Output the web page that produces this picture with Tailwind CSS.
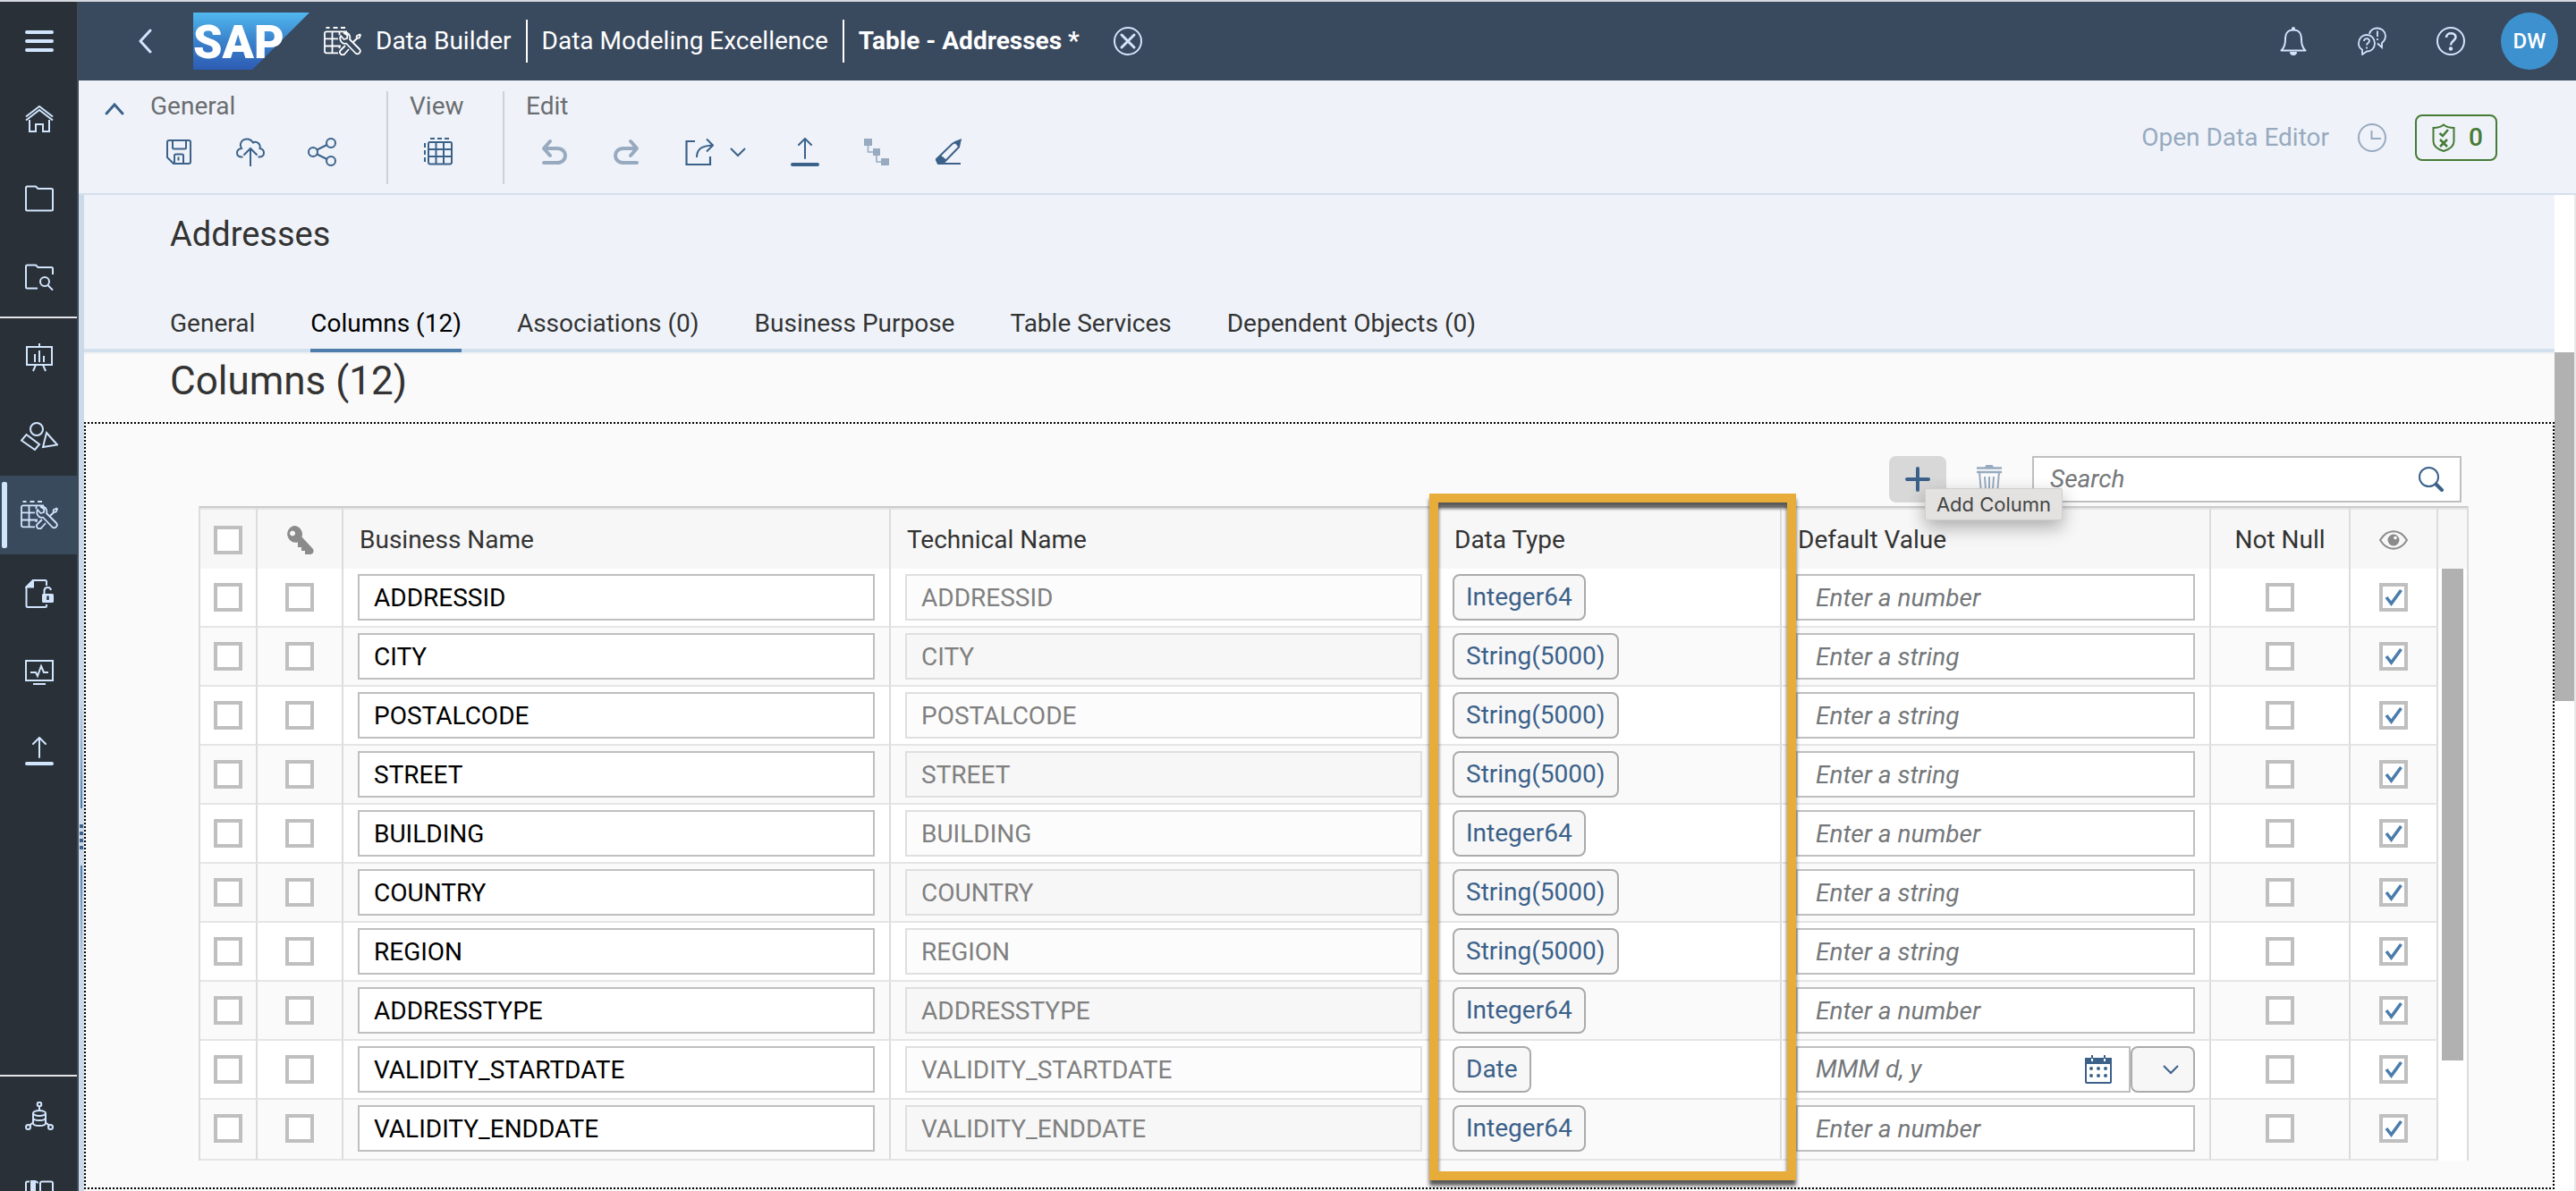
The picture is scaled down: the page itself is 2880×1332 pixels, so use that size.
<!DOCTYPE html>
<html lang="en">
<head>
<meta charset="utf-8">
<title>Data Builder - Table - Addresses</title>
<script src="https://cdn.jsdelivr.net/npm/@tailwindcss/browser@4"></script>
</head>
<body class="h-screen overflow-hidden bg-[#fafafa] font-['Roboto',sans-serif] text-[28px] leading-8 text-[#333]">
<svg class="hidden" aria-hidden="true">
  <symbol id="data-builder" viewBox="0 0 42 32">
    <g fill="none" stroke="currentColor" stroke-width="1.8" stroke-linejoin="round">
      <path d="M2.500 1h4M10.500 1h5M19 1h5"/>
      <path d="M26 5.300H3q-2 0-2 2v20q0 2 2 2h13M9.500 5.300v24M17.500 5.300v4M17.500 21v3M1 13.300h15M1 21.500h18"/>
      <path d="M19 10l3.500 4 3.500-1 .5-3.500-4-2.500c3.500-1.800 8 2 6.500 7l11 11a3.200 3.200 0 0 1-4.500 4.500L25 18.500c-4 1.500-8.500-3.500-6-8.500z"/>
      <path d="M33 17l4.500-4.500M37 10l3.300-1.500.7.8-1.500 3.200-1.700.5-1.300-1.300zM24 21l-5 5a3 3 0 0 0 4.200 4.500L28 25"/>
    </g>
  </symbol>
  <symbol id="check" viewBox="0 0 32 32"><path d="M8 16l5.500 7L24.500 8" fill="none" stroke="#4a7cac" stroke-width="3.600"/></symbol>
</svg>

<div class="flex h-full border-t-2 border-[#d5d9df]">
  <!-- Side navigation -->
  <aside class="flex w-[88px] shrink-0 flex-col border-r-2 border-[#404a57] bg-[#2a3037] text-[#d1e5fd]">
    <nav class="flex min-h-0 flex-1 flex-col" aria-label="Main">
      <button class="grid h-[88px] shrink-0 place-items-center pl-[2px]" aria-label="Menu"><svg class="size-8" viewBox="0 0 32 32" stroke="currentColor" stroke-width="4" stroke-linecap="round"><path d="M2 6h28M2 16h28M2 26h28"/></svg></button>
      <a href="#" class="grid h-[88px] shrink-0 place-items-center pl-[2px]" aria-label="Home"><svg class="size-8" viewBox="0 0 32 32" fill="none" stroke="currentColor" stroke-width="2"><path d="M1 16.500L16 5l15 11.500M1 12.500L16 1l15 11.500"/><path d="M5 16v13h7v-8h8v8h7V16"/></svg></a>
      <a href="#" class="grid h-[88px] shrink-0 place-items-center pl-[2px]" aria-label="Spaces"><svg class="size-8" viewBox="0 0 32 32" fill="none" stroke="currentColor" stroke-width="2"><path d="M1 4q0-1.500 1.500-1.500H12l2.500 2.500H29.500q1.500 0 1.500 1.500V28q0 1.500-1.500 1.500h-27Q1 29.500 1 28z"/></svg></a>
      <a href="#" class="grid h-[88px] shrink-0 place-items-center pl-[2px]" aria-label="Repository Explorer"><svg class="size-8" viewBox="0 0 32 32" fill="none" stroke="currentColor" stroke-width="2"><path d="M14 28.500H2.500Q1 28.500 1 27V4q0-1.500 1.500-1.500H12L14.500 5H29.500Q31 5 31 6.500V13"/><circle cx="22" cy="21" r="5"/><path d="M25.500 25l5.500 5.500"/></svg></a>
      <div class="h-[2px] shrink-0 bg-[#e3e5e8]"></div>
      <a href="#" class="grid h-[88px] shrink-0 place-items-center pl-[2px]" aria-label="Analytics"><svg class="size-8" viewBox="0 0 32 32" fill="none" stroke="currentColor" stroke-width="2"><path d="M2 4h28v20H2zM16 0v4M12 24l-3 7M20 24l3 7M11 12v9M16 8v13M21 14v7"/></svg></a>
      <a href="#" class="grid h-[88px] shrink-0 place-items-center pl-[2px]" aria-label="Business Builder"><svg class="h-8 w-[42px]" viewBox="0 0 42 32" fill="none" stroke="currentColor" stroke-width="2"><circle cx="18" cy="8" r="7"/><path d="M6.500 14l14.500 11-5 6L1 20.500zM29 12l12 13.500-16 2.500z"/></svg></a>
      <a href="#" aria-current="page" class="flex h-[88px] shrink-0 items-center gap-[15px] bg-[#394a5c] pl-[2px]" aria-label="Data Builder"><span class="h-[74px] w-[6px] rounded-[2px] bg-[#d1e5fd]"></span><svg class="h-8 w-[42px]"><use href="#data-builder"/></svg></a>
      <a href="#" class="grid h-[88px] shrink-0 place-items-center pl-[2px]" aria-label="Data Access Controls"><svg class="size-8" viewBox="0 0 32 32" fill="none" stroke="currentColor" stroke-width="2"><path d="M24 7V2.500Q24 1 22.500 1H9L1.500 9v20.500Q1.500 31 3 31h19.500q1.500 0 1.500-1.500V28"/><path d="M9 1v7.500H1.500z" fill="currentColor"/><path d="M21.500 17v-4a3.800 3.800 0 0 1 7.500-1"/><rect x="19" y="16" width="13" height="10" rx="1.500" fill="currentColor" stroke="none"/><path d="M25.500 18.500v4.500" stroke="#2a3037" stroke-width="2.500"/></svg></a>
      <a href="#" class="grid h-[88px] shrink-0 place-items-center pl-[2px]" aria-label="Data Integration Monitor"><svg class="size-8" viewBox="0 0 32 32" fill="none" stroke="currentColor" stroke-width="2"><path d="M1 3h30v22H1zM9 29h14M6 16h6l2 4 4-11 3 7h5"/></svg></a>
      <a href="#" class="grid h-[88px] shrink-0 place-items-center pl-[2px]" aria-label="Upload"><svg class="size-8" viewBox="0 0 32 32" fill="none" stroke="currentColor" stroke-width="2" stroke-linecap="round"><path d="M16 1v22M9 8l7-7 7 7"/><path d="M2 30h28" stroke-width="4"/></svg></a>
    </nav>
    <nav class="h-[130px] shrink-0 overflow-hidden border-t-2 border-[#e3e5e8]" aria-label="Administration">
      <a href="#" class="grid h-[88px] place-items-center pl-[2px]" aria-label="Connections"><svg class="size-8" viewBox="0 0 32 32" fill="none" stroke="currentColor" stroke-width="2"><circle cx="16" cy="3" r="2.300"/><circle cx="3.500" cy="28.500" r="2.500"/><circle cx="28.500" cy="28.500" r="2.500"/><path d="M16 5.300V11M5.500 26.500L8 24M26.500 26.500L24 24M9 13v11c0 4 14 4 14 0V13M9 18c0 4 14 4 14 0"/><ellipse cx="16" cy="13" rx="7" ry="3"/></svg></a>
      <a href="#" class="grid h-[88px] place-items-center pl-[2px]" aria-label="Content Network"><svg class="size-8" viewBox="0 0 32 32" fill="none" stroke="currentColor" stroke-width="2"><path d="M1 31V3q0-1.500 1.500-1.500H5M17 31V3.500q0-2 2-2h10q2 0 2 2V31"/><path d="M7 1h4v30H7z" fill="currentColor"/><path d="M12 1.500q2 0 2 2"/></svg></a>
    </nav>
  </aside>

  <div class="flex min-w-0 flex-1 flex-col">
    <!-- Shell bar -->
    <header class="flex h-[88px] shrink-0 items-center bg-[#39495e] pr-5 text-white">
      <button class="mr-9 ml-14 grid h-12 w-9 place-items-center text-[#d1e5fd]" aria-label="Back"><svg class="h-7 w-4" viewBox="0 0 16 28" fill="none" stroke="currentColor" stroke-width="3" stroke-linecap="round" stroke-linejoin="round"><path d="M14 2L3 14l11 12"/></svg></button>
      <svg class="h-16 w-[130px] shrink-0" viewBox="0 0 130 64" role="img" aria-label="SAP"><defs><linearGradient id="sap" x1="0" x2="0" y1="0" y2="1"><stop offset="0" stop-color="#51b8ee"/><stop offset=".5" stop-color="#3a82cc"/><stop offset="1" stop-color="#2d5cb4"/></linearGradient></defs><path d="M0 0h130L66 64H0z" fill="url(#sap)"/><text x="0" y="51" fill="#fff" font-family="Roboto, sans-serif" font-weight="900" font-size="52">SAP</text></svg>
      <svg class="mr-4 ml-4 h-8 w-[42px] shrink-0"><use href="#data-builder"/></svg>
      <nav class="flex items-center gap-4 whitespace-nowrap" aria-label="Breadcrumb">
        <a href="#">Data Builder</a>
        <span class="h-12 w-[2px] bg-white"></span>
        <a href="#">Data Modeling Excellence</a>
        <span class="h-12 w-[2px] bg-white"></span>
        <a href="#" aria-current="page" class="font-bold">Table - Addresses *</a>
      </nav>
      <button class="ml-[38px] text-[#d1e5fd]" aria-label="Close"><svg class="size-8" viewBox="0 0 32 32" fill="none" stroke="currentColor" stroke-width="2"><circle cx="16" cy="16" r="15"/><path d="M9 9l14 14M23 9L9 23" stroke-width="3" stroke-linecap="round"/></svg></button>
      <div class="ml-auto flex items-center text-[#d1e5fd]">
        <button class="grid w-[88px] place-items-center" aria-label="Notifications"><svg class="size-8" viewBox="0 0 32 32" fill="none" stroke="currentColor" stroke-width="2"><path d="M2.500 26.500c3-3 4.500-7 4.500-12 0-7 2-11 9-11s9 4 9 11c0 5 1.500 9 4.500 12z" stroke-linejoin="round"/><path d="M14 2a2 2 0 0 1 4 0v1h-4zM12 28h8a4 4 0 0 1-8 0z" fill="currentColor" stroke="none"/></svg></button>
        <button class="grid w-[88px] place-items-center" aria-label="Feedback"><svg class="size-8" viewBox="0 0 32 32" fill="none" stroke="currentColor" stroke-width="1.800"><path d="M13 8c1.500-9 17-9 18 2 0 4-1.500 6-4 8v5l-5-4.500"/><path d="M22 4.500v6.500M22 13v2"/><path d="M5 25.500C2 24 1 21 1 18.500 1 13 5 9 10 9s9 4 9 9.500-4 9-9 9L5 31z" stroke-linejoin="round"/><path d="M7 16c0-4 6.500-3.500 6 0 0 2-3 2-3 4.500M10 22.500v2"/></svg></button>
        <button class="grid w-[88px] place-items-center" aria-label="Help"><svg class="size-8" viewBox="0 0 32 32" fill="none" stroke="currentColor" stroke-width="2"><circle cx="16" cy="16" r="15"/><path d="M11 12c0-6.500 10.500-6 10.500-.5 0 4-5.500 4-5.500 9" stroke-width="2.600"/><circle cx="16" cy="24.500" r="2.200" fill="currentColor" stroke="none"/></svg></button>
      </div>
      <button class="ml-3 grid size-16 place-items-center rounded-full bg-[#3d91ce] text-2xl font-medium text-white" aria-label="Profile">DW</button>
    </header>

    <!-- Toolbar -->
    <div class="flex h-32 shrink-0 items-start border-b-2 border-[#d3e0ed] bg-[#eff3f9] pt-3 text-[#3b618a]">
      <button class="mt-3 ml-[28px] grid h-4 w-6 place-items-center" aria-label="Collapse toolbar"><svg class="h-4 w-6" viewBox="0 0 24 16" fill="none" stroke="currentColor" stroke-width="3" stroke-linecap="round"><path d="M3 13l9-10 9 10"/></svg></button>
      <section class="ml-5">
        <h2 class="pt-px pl-2 text-[#6a6d70]">General</h2>
        <div class="mt-[7px] flex h-14 items-center">
          <button class="grid w-20 place-items-center" aria-label="Save"><svg class="size-8" viewBox="0 0 32 32" fill="none" stroke="currentColor" stroke-width="2"><path d="M3 5q0-2 2-2h22q2 0 2 2v22q0 2-2 2H10l-7-7zM9 3v8q0 1.500 1.500 1.500h12Q24 12.500 24 11V3M11 29V20q0-1.500 1.500-1.500h7q1.500 0 1.500 1.500v9M15.500 21.500v4"/></svg></button>
          <button class="grid w-20 place-items-center" aria-label="Deploy"><svg class="size-8" viewBox="0 0 32 32" fill="none" stroke="currentColor" stroke-width="2"><path d="M16 32V12M8.500 19.500L16 12l7.500 7.500M7.500 21.500C3 22 1 20 1 17s2-4.500 5-5C1 3 14-3 19 5.500c4-2 9 1.500 7.500 6.500 3 .5 4.500 2 4.500 5s-2 5-6.500 4.500"/></svg></button>
          <button class="grid w-20 place-items-center" aria-label="Share"><svg class="size-8" viewBox="0 0 32 32" fill="none" stroke="currentColor" stroke-width="2"><circle cx="6" cy="16" r="5"/><circle cx="26" cy="6" r="5"/><circle cx="26" cy="26" r="5"/><path d="M10.500 13.500L21.500 8M10.500 18.500l11 5.500"/></svg></button>
        </div>
      </section>
      <div class="ml-8 h-[104px] w-[2px] bg-[#cdd2d8]"></div>
      <section class="ml-4 w-[112px]">
        <h2 class="pt-px pl-2 text-[#6a6d70]">View</h2>
        <div class="mt-[7px] flex h-14 items-center">
          <button class="grid w-20 place-items-center" aria-label="Columns view"><svg class="size-8" viewBox="0 0 32 32" fill="none" stroke="currentColor" stroke-width="2"><path d="M5 6.500q0-1.500 1.500-1.500h23Q31 5 31 6.500v21q0 2-2 2H7q-2 0-2-2zM13.500 5v24M22 5v24M5 13h26M5 21h26M7 1h5M15 1h5M23 1h5M1 6v5M1 14v5M1 22v5"/></svg></button>
        </div>
      </section>
      <div class="h-[104px] w-[2px] bg-[#cdd2d8]"></div>
      <section class="ml-4">
        <h2 class="pt-px pl-2 text-[#6a6d70]">Edit</h2>
        <div class="mt-[7px] flex h-14 items-center">
          <button disabled class="grid w-20 place-items-center text-[#98aac0]" aria-label="Undo"><svg class="size-8" viewBox="0 0 32 32" fill="none" stroke="currentColor" stroke-width="4" stroke-linecap="round" stroke-linejoin="round"><path d="M11 4l-7 8 7 8M4 12h15c12 0 12 16 0 16H4"/></svg></button>
          <button disabled class="grid w-20 place-items-center text-[#98aac0]" aria-label="Redo"><svg class="size-8" viewBox="0 0 32 32" fill="none" stroke="currentColor" stroke-width="4" stroke-linecap="round" stroke-linejoin="round"><path d="M21 4l7 8-7 8M28 12H13C1 12 1 28 13 28h15"/></svg></button>
          <button class="flex w-[120px] items-center gap-[18px] pl-[26px]" aria-label="Export"><svg class="size-8" viewBox="0 0 32 32" fill="none" stroke="currentColor" stroke-width="2"><path d="M11 4H1.500v26H28V21" stroke-width="2.200"/><path d="M13 22c0-9 5-13 18-13.500M24 1.500l7 7-7 7" /></svg><svg class="h-3 w-[18px]" viewBox="0 0 18 12" fill="none" stroke="currentColor" stroke-width="2"><path d="M1 2l8 8 8-8"/></svg></button>
          <button class="grid w-20 place-items-center" aria-label="Import"><svg class="size-8" viewBox="0 0 32 32" fill="none" stroke="currentColor" stroke-width="2" stroke-linecap="round"><path d="M16 1v22M9 8l7-7 7 7"/><path d="M2 30h28" stroke-width="4"/></svg></button>
          <button disabled class="grid w-20 place-items-center text-[#98aac0]" aria-label="Lineage"><svg class="size-8" viewBox="0 0 32 32" fill="none" stroke="currentColor" stroke-width="1.600"><path d="M2 1h9v8H2zM12 12h8v8h-8zM21 23h9v8h-9z" fill="currentColor" stroke="none"/><path d="M6.500 9v7H12M16 20v7h5"/></svg></button>
          <button class="grid w-20 place-items-center" aria-label="Edit"><svg class="size-8" viewBox="0 0 32 32" fill="none" stroke="currentColor" stroke-width="2"><path d="M29.500 3L28 10.500 11 28l-6 .5L3 24 21 6.500z"/><path d="M29.500 3L24 5l3.500 4zM8 21l-5 4 2 4h3l5-4z" fill="currentColor"/><path d="M7 29h23"/></svg></button>
        </div>
      </section>
      <div class="mt-[26px] mr-[88px] ml-auto flex items-center text-[#98aac0]">
        <button disabled class="whitespace-nowrap">Open Data Editor</button>
        <button disabled class="ml-8" aria-label="Version history"><svg class="size-8" viewBox="0 0 32 32" fill="none" stroke="currentColor" stroke-width="2"><circle cx="16" cy="16" r="15"/><path d="M15.500 8v9H26"/></svg></button>
        <button class="ml-8 flex h-[52px] w-[92px] items-center gap-3 rounded-lg border-2 border-[#457b35] pl-[14px] font-medium text-[#457b35]" aria-label="Validation messages, 0"><svg class="size-8" viewBox="0 0 32 32" fill="none" stroke="currentColor" stroke-width="2"><path d="M16 1.500C13 4 9 5 4.500 5v15c0 5 5 9 11.500 11 6.500-2 11.500-6 11.500-11V5C23 5 19 4 16 1.500z"/><path d="M11.500 11l3.500 3 6-7M12 18l8 8M20 18l-8 8" stroke-width="2.500"/></svg>0</button>
      </div>
    </div>

    <div class="flex min-h-0 flex-1">
      <!-- Splitter -->
      <div class="flex w-[6px] shrink-0 flex-col items-center bg-[#ccd9e8] pt-[562px]" aria-hidden="true">
        <div class="h-[124px] w-[2px] bg-linear-to-t from-[#4e7cab] to-[#ccd9e8]"></div>
        <div class="my-[18px] flex flex-col gap-1">
          <span class="size-1 bg-[#3b618a]"></span><span class="size-1 bg-[#3b618a]"></span><span class="size-1 bg-[#3b618a]"></span><span class="size-1 bg-[#3b618a]"></span>
        </div>
        <div class="h-[124px] w-[2px] bg-linear-to-b from-[#4e7cab] to-[#ccd9e8]"></div>
      </div>

      <main class="min-w-0 flex-1">
        <div class="border-b-2 border-[#f0f1f2] bg-[#eff3f9]">
          <h1 class="px-24 pt-5 text-[38px] leading-[48px]">Addresses</h1>
          <nav class="mt-12 flex gap-[62px] border-b-4 border-[#d3e0ed] px-24" aria-label="Sections">
            <a href="#" class="pt-3 pb-3">General</a>
            <a href="#" aria-current="true" class="-mb-1 border-b-4 border-[#4e7cab] pt-3 pb-3 text-black">Columns (12)</a>
            <a href="#" class="pt-3 pb-3">Associations (0)</a>
            <a href="#" class="pt-3 pb-3">Business Purpose</a>
            <a href="#" class="pt-3 pb-3">Table Services</a>
            <a href="#" class="pt-3 pb-3">Dependent Objects (0)</a>
          </nav>
        </div>
        <h2 class="px-24 pt-[2px] pb-[18px] text-[44px] leading-[56px]">Columns (12)</h2>
        <section class="border-2 border-dotted border-black pt-9 pr-[94px] pb-[30px] pl-[126px]">
          <div class="flex justify-end gap-4 pr-2">
            <button class="relative grid h-[52px] w-16 place-items-center rounded-lg bg-[#d8d8d8] text-[#3b618a]" aria-label="Add Column">
              <svg class="size-7" viewBox="0 0 28 28" stroke="currentColor" stroke-width="4" stroke-linecap="round"><path d="M14 2v24M2 14h24"/></svg>
              <span role="tooltip" class="absolute top-9 left-10 z-20 flex h-9 w-[154px] items-center justify-center rounded-[2px] border border-[#cfcecd] bg-[#e3e2e0] font-['Inter',sans-serif] text-[22px] leading-6 whitespace-nowrap text-[#444] shadow-[0_8px_20px_rgba(0,0,0,0.3)]">Add Column</span>
            </button>
            <button disabled class="grid h-[52px] w-16 place-items-center text-[#98aac0]" aria-label="Delete"><svg class="size-8" viewBox="0 0 32 32" fill="none" stroke="currentColor" stroke-width="2"><path d="M2 3.500h28M2 8h28" stroke-width="2.500"/><path d="M12 3l1-2h6l1 2z" fill="currentColor"/><path d="M5 8l2 23h18l2-23M11 13l1 15M16 13v15M21 13l-1 15"/></svg></button>
            <div class="flex h-[52px] w-[480px] items-center border-2 border-[#bfbfbf] bg-white pr-[18px] pl-[18px]">
              <input type="text" aria-label="Search" placeholder="Search" class="min-w-0 flex-1 placeholder:text-[#74777a] placeholder:italic">
              <svg class="size-7 text-[#3b618a]" viewBox="0 0 28 28" fill="none" stroke="currentColor" stroke-width="2"><circle cx="11.500" cy="11.500" r="10.500"/><path d="M19.500 19.500l6.500 6.500" stroke-width="4" stroke-linecap="round"/></svg>
            </div>
          </div>

          <div class="relative mt-1 flex border-x-2 border-t-2 border-x-[#dcdcdc] border-t-[#ccc]">
            <table class="w-full min-w-0 flex-1 table-fixed border-separate border-spacing-0">
              <colgroup><col class="w-16"><col class="w-24"><col><col><col class="w-[384px]"><col class="w-[480px]"><col class="w-[156px]"><col class="w-[98px]"></colgroup>
              <thead>
                <tr class="h-[68px] bg-[#f7f7f7] text-left *:border-t-2 *:border-r-2 *:border-t-[#e5e5e5] *:border-r-[#dcdcdc] *:pt-[2px] *:pb-0 *:font-normal">
                  <th><input type="checkbox" aria-label="Select all" class="mx-auto block size-8 appearance-none border-4 border-[#bfbfbf] bg-white"></th>
                  <th aria-label="Key"><svg class="mx-auto size-8" viewBox="0 0 32 32" fill="#8b8b8b"><path fill-rule="evenodd" d="M9.500 0a9.500 9.500 0 0 1 9 12.500L31 26c1.500 3 0 6-3 6h-6v-4h-4v-4h-4v-5.500A9.500 9.500 0 1 1 9.500 0zM8 5.500a3 3 0 1 0 .1 0z"/></svg></th>
                  <th class="pl-[18px]">Business Name</th>
                  <th class="pl-[18px]">Technical Name</th>
                  <th class="pl-[18px]">Data Type</th>
                  <th class="pl-[18px]">Default Value</th>
                  <th class="text-center">Not Null</th>
                  <th aria-label="Visible"><svg class="mx-auto size-8" viewBox="0 0 32 32" fill="none" stroke="#8b8b8b" stroke-width="2"><path d="M1 16C9 3 23 3 31 16 23 29 9 29 1 16z"/><circle cx="16" cy="16" r="5.500" fill="#8b8b8b"/><circle cx="18" cy="13.500" r="1.800" fill="#fff" stroke="none"/></svg></th>
                </tr>
              </thead>
              <tbody id="rows"></tbody>
            </table>
            <div class="w-8 shrink-0 bg-white" aria-hidden="true">
              <div class="h-[68px] border-t-2 border-[#e5e5e5] bg-[#f7f7f7]"></div>
              <div class="ml-1 h-[550px] w-6 bg-[#b1b1b1]"></div>
            </div>
            <!-- Highlight around the Data Type column -->
            <div class="pointer-events-none absolute -top-4 right-[750px] -bottom-[22px] z-10 w-[410px] border-10 border-[#e7ac3a] drop-shadow-[0_6px_2px_rgba(0,0,0,0.65)]"></div>
          </div>
        </section>
      </main>

      <div class="w-6 shrink-0 border-r-2 border-[#e8e8e8] bg-white pt-[176px]" aria-hidden="true">
        <div class="h-[390px] bg-[#b1b1b1]"></div>
      </div>
    </div>
  </div>
</div>

<script>
const columns = [
  ["ADDRESSID", "Integer64"], ["CITY", "String(5000)"], ["POSTALCODE", "String(5000)"],
  ["STREET", "String(5000)"], ["BUILDING", "Integer64"], ["COUNTRY", "String(5000)"],
  ["REGION", "String(5000)"], ["ADDRESSTYPE", "Integer64"], ["VALIDITY_STARTDATE", "Date"],
  ["VALIDITY_ENDDATE", "Integer64"]
];
const box = (label, extra = "") => `<input type="checkbox" aria-label="${label}" ${extra} class="peer col-start-1 row-start-1 block size-8 appearance-none border-4 border-[#bfbfbf] bg-white">`;
const tick = (label, extra) => `<span class="mx-auto grid size-8">${box(label, extra)}<svg class="pointer-events-none invisible col-start-1 row-start-1 size-8 peer-checked:visible"><use href="#check"/></svg></span>`;
const field = "h-[52px] border-2 border-[#bfbfbf] bg-white text-black placeholder:italic placeholder:text-[#74777a]";
const dateField = name => `<div class="flex">
  <div class="flex min-w-0 flex-1 items-center pr-[18px] ${field}">
    <input type="text" aria-label="Default value of ${name}" placeholder="MMM d, y" class="w-0 min-w-0 flex-1 pl-5 placeholder:text-[#74777a] placeholder:italic">
    <button class="shrink-0" aria-label="Open calendar"><svg class="size-8" viewBox="0 0 32 32" fill="none" stroke="#3b618a" stroke-width="2"><path d="M3 4h26q1 0 1 1v25q0 1-1 1H3q-1 0-1-1V5q0-1 1-1z"/><path d="M2 4h28v5H2zM9 0v4M23 0v4" fill="#3b618a"/><path d="M9 4v3M23 4v3" stroke="#fff"/><g fill="#3b618a" stroke="none"><circle cx="8" cy="15" r="2"/><circle cx="16" cy="15" r="2"/><circle cx="24" cy="15" r="2"/><circle cx="8" cy="23" r="2"/><circle cx="16" cy="23" r="2"/><circle cx="24" cy="23" r="2"/></g></svg></button>
  </div>
  <button aria-label="More defaults" class="flex h-[52px] w-[72px] shrink-0 items-center justify-end rounded-lg border-2 border-[#ababab] bg-[#f7f7f7] pr-4"><svg class="h-3 w-[18px]" viewBox="0 0 18 12" fill="none" stroke="#3b618a" stroke-width="2"><path d="M1 2l8 8 8-8"/></svg></button>
</div>`;
const valueField = (name, type) => `<input type="text" aria-label="Default value of ${name}" placeholder="Enter a ${type === "Integer64" ? "number" : "string"}" class="block w-full px-5 ${field}">`;
document.getElementById("rows").innerHTML = columns.map(([name, type]) => `
<tr class="h-[66px] bg-white last:h-[68px] even:bg-[#fafafa] *:border-r-2 *:border-b-2 *:border-r-[#dcdcdc] *:border-b-[#e5e5e5] *:py-0 last:*:pb-[2px]">
  <td>${tick("Select " + name)}</td>
  <td>${tick(name + " is key")}</td>
  <td class="px-4"><input type="text" aria-label="Business name" value="${name}" class="block w-full px-4 ${field}"></td>
  <td class="px-4"><input type="text" readonly aria-label="Technical name" value="${name}" class="block h-[52px] w-full border-2 border-[#dfdfdf] bg-black/1 px-4 text-[#808080]"></td>
  <td class="px-4"><button class="block h-[52px] rounded-lg border-2 border-[#ababab] bg-[#f7f7f7] px-[13px] text-[#3b618a]">${type}</button></td>
  <td class="px-4">${type === "Date" ? dateField(name) : valueField(name, type)}</td>
  <td>${tick(name + " not null")}</td>
  <td>${tick(name + " visible", "checked")}</td>
</tr>`).join("");
</script>
</body>
</html>
